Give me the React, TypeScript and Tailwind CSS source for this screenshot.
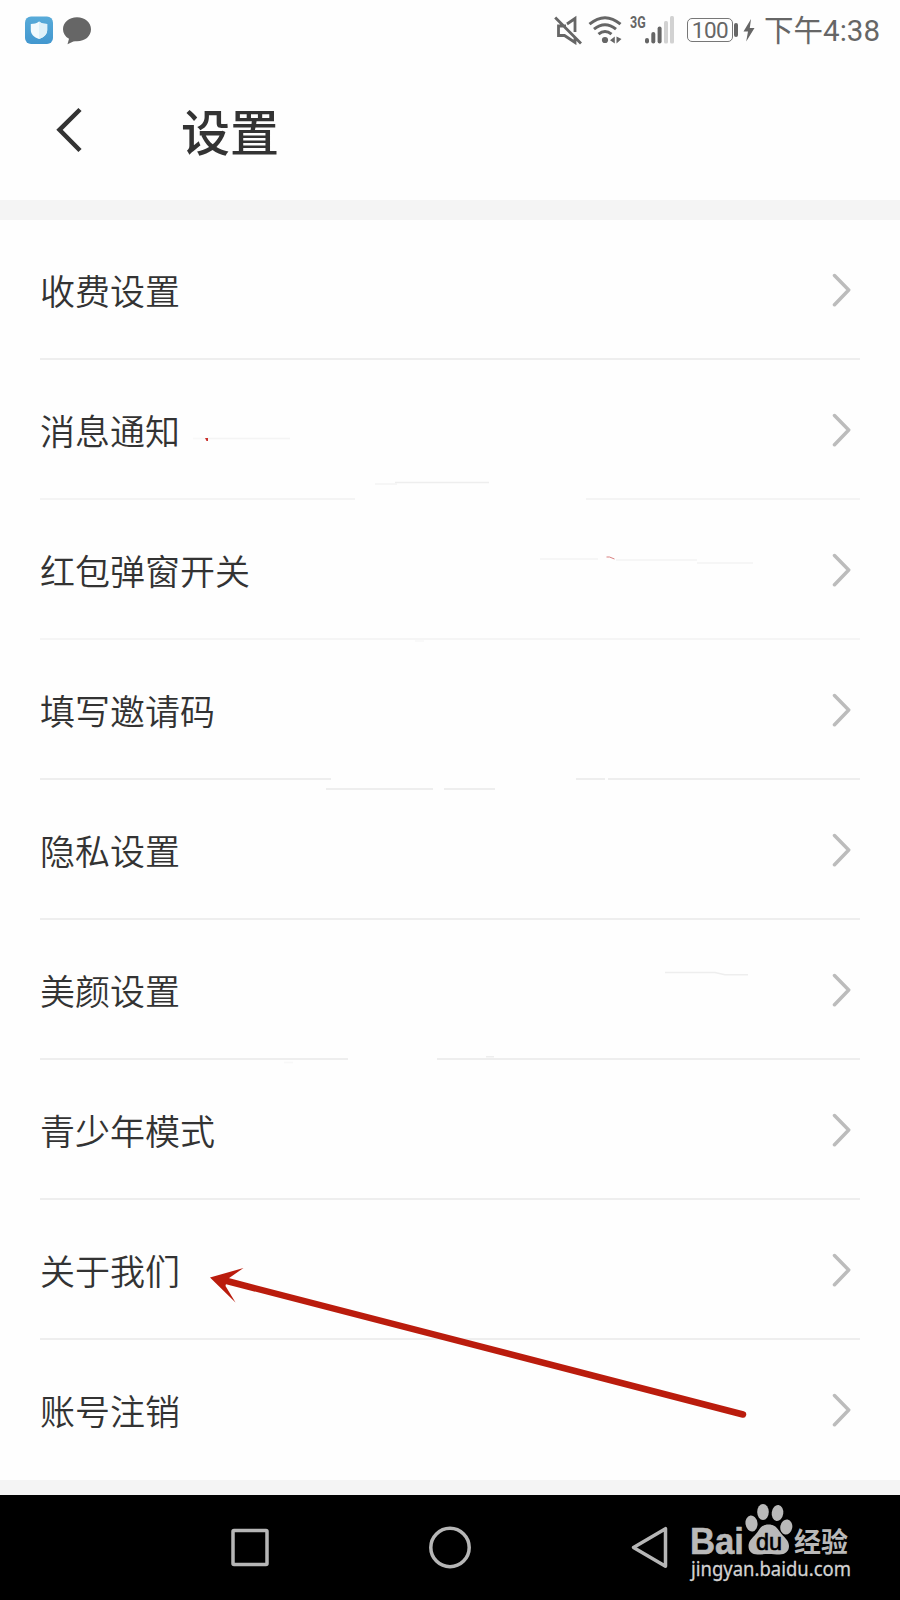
type Row = {
    label: string;
    // divider pieces as [start, end], measured from the left edge of the screen
    lines: [number, number][];
    lineColor?: string;
};

const rows: Row[] = [
    { label: "收费设置", lines: [[40, 860]] },
    { label: "消息通知", lines: [[40, 355], [586, 860]], lineColor: "#f4f4f4" },
    { label: "红包弹窗开关", lines: [[40, 860]], lineColor: "#f5f5f5" },
    { label: "填写邀请码", lines: [[40, 331], [576, 605], [608, 860]] },
    { label: "隐私设置", lines: [[40, 860]] },
    { label: "美颜设置", lines: [[40, 348], [437, 860]] },
    { label: "青少年模式", lines: [[40, 860]] },
    { label: "关于我们", lines: [[40, 860]] },
    { label: "账号注销", lines: [] },
];

function StatusBar() {
    return (
        <div className="flex h-[60px] items-center pl-[25px] pr-[20px] text-[#666666]">
            <svg width="28" height="28" viewBox="0 0 28 28">
                <defs>
                    <linearGradient id="tile" x1="0" y1="0" x2="0" y2="1">
                        <stop offset="0" stopColor="#58abd9" />
                        <stop offset="1" stopColor="#4297cf" />
                    </linearGradient>
                </defs>
                <rect y="0.500" width="28" height="27.500" rx="6" fill="url(#tile)" />
                <path d="M14 5.500c2.500 1.800 5 2.400 8.200 2.500v6c0 4.500-3.200 7-8.200 9-5-2-8.200-4.500-8.200-9V8C9 7.900 11.500 7.300 14 5.500z" fill="#f2fafd" />
                <path d="M14 5.500c2.500 1.800 5 2.400 8.200 2.500v6c0 4.500-3.200 7-8.200 9z" fill="#def1f9" />
            </svg>
            <svg className="ml-[9px]" width="30" height="30" viewBox="0 0 30 30" fill="currentColor">
                <path d="M15 2.200c8 0 14 5 14 12s-6 12-14 12c-1.500 0-2.500 0-3.700.2L5.500 29.200l1.500-5.400C3 21.500 1 18 1 14.200 1 7.200 7 2.200 15 2.200z" />
            </svg>

            {/* muted */}
            <svg className="ml-[462px]" width="30" height="30" viewBox="0 0 30 30" fill="none" stroke="currentColor" strokeWidth="2.800">
                <path d="M13 9L21 3.500V17M12 11H4.500v9.500h6l10.500 7V22M1.200 2.500L27 28.500" />
            </svg>
            {/* wifi */}
            <svg className="ml-[4px]" width="34" height="30" viewBox="0 0 34 30" fill="none" stroke="currentColor" strokeWidth="3">
                <path d="M1.500 9.200q15.500-13 31 0M6 14.200q11-9 22 0M10.500 19.200q6.500-5.500 13 0" />
                <circle cx="17" cy="25" r="3.100" fill="currentColor" stroke="none" />
                <path d="M26.800 21.500v7L22 25.200zM28.500 21.500v7L33.500 24z" fill="currentColor" stroke="none" />
            </svg>
            <div className="ml-[8px] -mt-[14px] w-[15px]">
                <div className="origin-left scale-x-[0.78] font-['Roboto',sans-serif] text-[16px] leading-none font-bold">3G</div>
            </div>
            <svg width="29" height="30" viewBox="0 0 29 30" fill="currentColor">
                <rect x="0" y="23" width="4" height="5.500" rx="2" />
                <rect x="6.300" y="17" width="4" height="11.500" rx="2" />
                <rect x="12.600" y="11.500" width="4" height="17" rx="2" />
                <g fill="#d2d2d2">
                    <rect x="19" y="6" width="4" height="22.500" rx="1.500" />
                    <rect x="25" y="1" width="4" height="27.500" rx="1.500" />
                </g>
            </svg>
            <div className="ml-[13px] flex h-[24px] w-[46px] items-center justify-center rounded-[5px] border-[1.500px] border-[#777777] font-['Roboto',sans-serif] text-[22.500px] leading-none tracking-[-0.500px]">
                100
            </div>
            <div className="ml-[1px] h-[14px] w-[4px] rounded-sm bg-[#666666]" />
            <svg className="ml-[5px]" width="12" height="24" viewBox="0 0 12 24" fill="currentColor">
                <path d="M8 1L.5 13.500H5L3.200 23.500 11.500 10H6.800z" />
            </svg>
            <div className="ml-auto pt-[4px] font-['Roboto','Noto_Sans_CJK_SC',sans-serif] text-[29.500px] leading-none whitespace-nowrap">下午4:38</div>
        </div>
    );
}

function Divider({ lines, color }: { lines: [number, number][]; color: string }) {
    return (
        <div className="flex h-[2px]">
            {lines.map(([from, to], i) => (
                <div
                    key={from}
                    className="h-full"
                    style={{
                        width: to - from,
                        marginLeft: from - (i === 0 ? 40 : lines[i - 1][1]),
                        backgroundColor: color,
                    }}
                />
            ))}
        </div>
    );
}

function SettingRow({ row }: { row: Row }) {
    return (
        <div className="flex h-[140px] flex-col px-[40px]">
            <div className="flex flex-1 items-center justify-between pt-[2px] pr-[9px]">
                <span className="-mt-[2px] text-[35px] leading-none font-[350] text-[#333333]">{row.label}</span>
                <svg width="20" height="36" viewBox="0 0 20 36" fill="none" stroke="#bcbcbc" strokeWidth="3.500" strokeLinecap="round" strokeLinejoin="round">
                    <path d="M3.500 3.500L17.700 18 3.500 32.700" />
                </svg>
            </div>
            <Divider lines={row.lines} color={row.lineColor ?? "#eeeeee"} />
        </div>
    );
}

// Pen marks and the red arrow drawn over the list
function Annotations() {
    return (
        <svg className="pointer-events-none absolute inset-0" width="900" height="1260" viewBox="0 220 900 1260" fill="none">
            <g stroke="#eeeeee" strokeWidth="1.500">
                <path d="M395 482.500h94M665 972.500h50l10 2.200h23M486 1056.700h8" />
                <path d="M207 438.500h83M375 484h22M540 559h58M616 560h81M697 563h56" stroke="#f4f4f4" />
                <path d="M193 438.500h12M415 641h9M284 1062.500h9" stroke="#f8f8f8" />
                <path d="M326 789h107M444 789h51" strokeWidth="2" />
            </g>
            <path d="M205 438h3v3h-1.500z" fill="#c9302c" />
            <path d="M606.500 557h3l5 2" stroke="#d98080" />
            <path d="M225 1280.500L743 1414.500" stroke="#ba1c0d" strokeWidth="6.500" strokeLinecap="round" />
            <path d="M210 1277.500L243.500 1268 227 1279.500 225.500 1286 235.500 1302.500z" fill="#ba1c0d" />
        </svg>
    );
}

function Watermark() {
    return (
        <svg className="overflow-visible" width="170" height="105" viewBox="688 1495 170 105" fill="#b9b9b9">
            <text x="690" y="1554" textLength="54" lengthAdjust="spacingAndGlyphs" fontFamily="Liberation Sans, sans-serif" fontWeight="700" fontSize="37" stroke="#b9b9b9" strokeWidth=".6">Bai</text>
            <ellipse cx="751.500" cy="1523.500" rx="6" ry="8" transform="rotate(-8 751.500 1523.500)" />
            <ellipse cx="763" cy="1512" rx="5.800" ry="8" />
            <ellipse cx="777.500" cy="1513" rx="5.800" ry="8" transform="rotate(8 777.500 1513)" />
            <ellipse cx="786.300" cy="1527" rx="6" ry="7.500" transform="rotate(10 786.300 1527)" />
            <path d="M768.500 1524.500c6 0 8.500 3 11.500 7.500 3.500 5 9 8 9 14 0 5.500-4 8.500-9.500 8.500-4 0-7-.5-11-.5s-7 .5-11 .5c-5.500 0-9-3-9-8.500 0-6 5.500-9 9-14 3-4.500 5-7.500 11-7.500z" />
            <text x="756" y="1549.500" textLength="26" lengthAdjust="spacingAndGlyphs" fontFamily="Liberation Sans, sans-serif" fontSize="24" fill="#000000" stroke="#000000" strokeWidth=".7">du</text>
            <text x="794" y="1552" textLength="54" lengthAdjust="spacingAndGlyphs" fontFamily="Noto Sans CJK SC, sans-serif" fontWeight="700" fontSize="27">经验</text>
            <text x="691" y="1575.500" textLength="160" lengthAdjust="spacingAndGlyphs" fontFamily="Noto Sans, sans-serif" fontSize="19.500" fill="#d2d2d2" stroke="#d2d2d2" strokeWidth=".3">jingyan.baidu.com</text>
        </svg>
    );
}

function NavBar() {
    return (
        <div className="flex h-[105px] items-center bg-black pl-[230px]">
            <svg width="40" height="45" viewBox="0 0 40 45" fill="none" stroke="#b6b6b6" strokeWidth="3.500">
                <rect x="3" y="5.500" width="34" height="34" rx="1" />
            </svg>
            <svg className="ml-[158px]" width="44" height="45" viewBox="0 0 44 45" fill="none" stroke="#b6b6b6" strokeWidth="3.500">
                <circle cx="22" cy="22.500" r="19.200" />
            </svg>
            <svg className="ml-[158px]" width="40" height="45" viewBox="0 0 40 45" fill="none" stroke="#b6b6b6" strokeWidth="3.500" strokeLinejoin="round">
                <path d="M3.500 22.500L35.500 3.700v37.600z" />
            </svg>
            <div className="ml-[18px]">
                <Watermark />
            </div>
        </div>
    );
}

export default function App() {
    return (
        <div className="h-[1600px] w-[900px] overflow-hidden bg-[#fefefe] font-['Noto_Sans_CJK_SC',sans-serif]">
            <StatusBar />
            <div className="flex h-[140px] items-center pl-[56px]">
                <svg width="28" height="46" viewBox="0 0 28 46" fill="none" stroke="#333333" strokeWidth="4.500">
                    <path d="M24 2.500L3.500 22.800 24 43.500" />
                </svg>
                <h1 className="ml-[97px] -mt-[2px] text-[49px] leading-none font-medium text-[#333333]">设置</h1>
            </div>
            <div className="h-[20px] bg-[#f4f4f4]" />
            <div className="relative">
                {rows.map((row) => (
                    <SettingRow key={row.label} row={row} />
                ))}
                <Annotations />
            </div>
            <div className="h-[15px] bg-[#f4f4f4]" />
            <NavBar />
        </div>
    );
}
